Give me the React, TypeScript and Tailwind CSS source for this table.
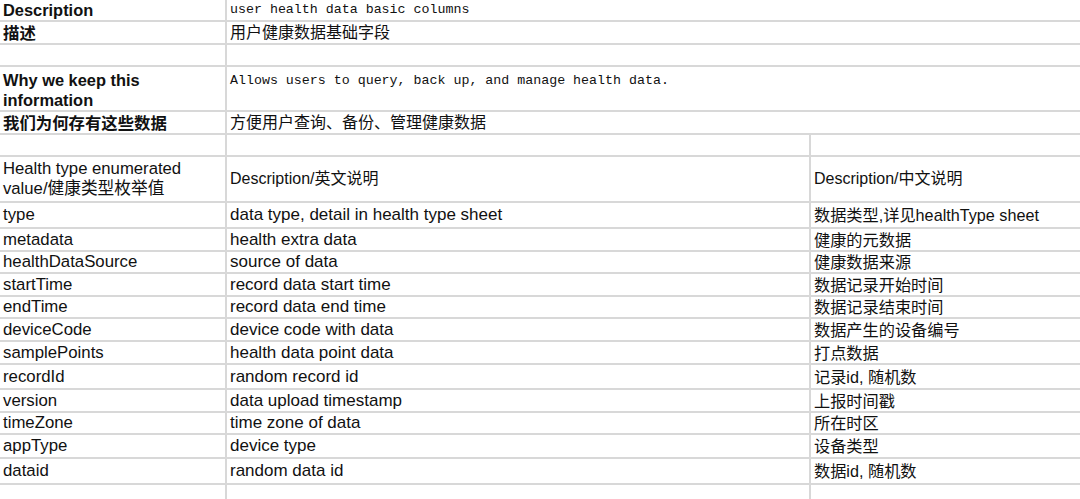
import React from 'react';

const sans = "font-['Liberation_Sans','Noto_Sans_CJK_SC',sans-serif]";
const mono = "font-['Liberation_Mono','Noto_Sans_CJK_SC',monospace]";

const line = 'border-[#d8d8d8]';

// rows in the upper block: label + one wide value cell
const topRows = [
  { label: 'Description', value: 'user health data basic columns', h: 'h-[22px]', mono: true },
  { label: '描述', value: '用户健康数据基础字段', h: 'h-[23px]', mono: false },
  { label: '', value: '', h: 'h-[22px]', mono: false },
  { label: 'Why we keep this information', value: 'Allows users to query, back up, and manage health data.', h: 'h-[45px]', mono: true, top: true },
  { label: '我们为何存有这些数据', value: '方便用户查询、备份、管理健康数据', h: 'h-[23px]', mono: false },
];

const fields = [
  { name: 'type', en: 'data type, detail in health type sheet', cn: '数据类型,详见healthType sheet', h: 'h-[26px]' },
  { name: 'metadata', en: 'health extra data', cn: '健康的元数据', h: 'h-[23px]' },
  { name: 'healthDataSource', en: 'source of data', cn: '健康数据来源', h: 'h-[22px]' },
  { name: 'startTime', en: 'record data start time', cn: '数据记录开始时间', h: 'h-[23px]' },
  { name: 'endTime', en: 'record data end time', cn: '数据记录结束时间', h: 'h-[22px]' },
  { name: 'deviceCode', en: 'device code with data', cn: '数据产生的设备编号', h: 'h-[23px]' },
  { name: 'samplePoints', en: 'health data point data', cn: '打点数据', h: 'h-[23px]' },
  { name: 'recordId', en: 'random record id', cn: '记录id, 随机数', h: 'h-[25px]' },
  { name: 'version', en: 'data upload timestamp', cn: '上报时间戳', h: 'h-[23px]' },
  { name: 'timeZone', en: 'time zone of data', cn: '所在时区', h: 'h-[22px]' },
  { name: 'appType', en: 'device type', cn: '设备类型', h: 'h-[24px]' },
  { name: 'dataid', en: 'random data id', cn: '数据id, 随机数', h: 'h-[26px]' },
];

function App() {
  return (
    <div className={`w-[1080px] h-[499px] overflow-hidden bg-white text-[#111] ${sans}`}>
      {/* upper block */}
      {topRows.map((r, i) => (
        <div key={i} className={`flex border-b-2 ${line} ${r.h}`}>
          <div
            className={`w-[227px] shrink-0 border-r-2 ${line} pl-[3px] font-bold text-[16.4px] leading-[20px] flex ${
              r.top ? 'items-start pt-[3px]' : 'items-center'
            }`}
          >
            {r.label}
          </div>
          <div
            className={`flex-1 pl-[3px] flex ${r.top ? 'items-start pt-[4px]' : 'items-center'} ${
              r.mono ? `${mono} text-[13.3px]` : 'text-[16px]'
            }`}
          >
            {r.value}
          </div>
        </div>
      ))}

      {/* lower table */}
      <div className={`flex border-b-2 ${line} h-[22px]`}>
        <div className={`w-[227px] shrink-0 border-r-2 ${line}`} />
        <div className={`w-[584px] shrink-0 border-r-2 ${line}`} />
        <div className="flex-1" />
      </div>
      <div className={`flex border-b-2 ${line} h-[46px] leading-[20px]`}>
        <div className={`w-[227px] shrink-0 border-r-2 ${line} pl-[3px] flex items-center text-[16.7px]`}>
          <span>
            Health type enumerated
            <br />
            value/健康类型枚举值
          </span>
        </div>
        <div className={`w-[584px] shrink-0 border-r-2 ${line} pl-[3px] flex items-center text-[16px]`}>
          Description/英文说明
        </div>
        <div className="flex-1 pl-[3px] flex items-center text-[16px]">Description/中文说明</div>
      </div>
      {fields.map((f) => (
        <div key={f.name} className={`flex border-b-2 ${line} ${f.h} leading-[20px]`}>
          <div className={`w-[227px] shrink-0 border-r-2 ${line} pl-[3px] flex items-center text-[16.8px]`}>
            {f.name}
          </div>
          <div className={`w-[584px] shrink-0 border-r-2 ${line} pl-[3px] flex items-center text-[17px]`}>
            {f.en}
          </div>
          <div className="flex-1 pl-[3px] flex items-center text-[16.2px]">{f.cn}</div>
        </div>
      ))}
      <div className="flex h-[40px]">
        <div className={`w-[227px] shrink-0 border-r-2 ${line}`} />
        <div className={`w-[584px] shrink-0 border-r-2 ${line}`} />
        <div className="flex-1" />
      </div>
    </div>
  );
}

export default App;
